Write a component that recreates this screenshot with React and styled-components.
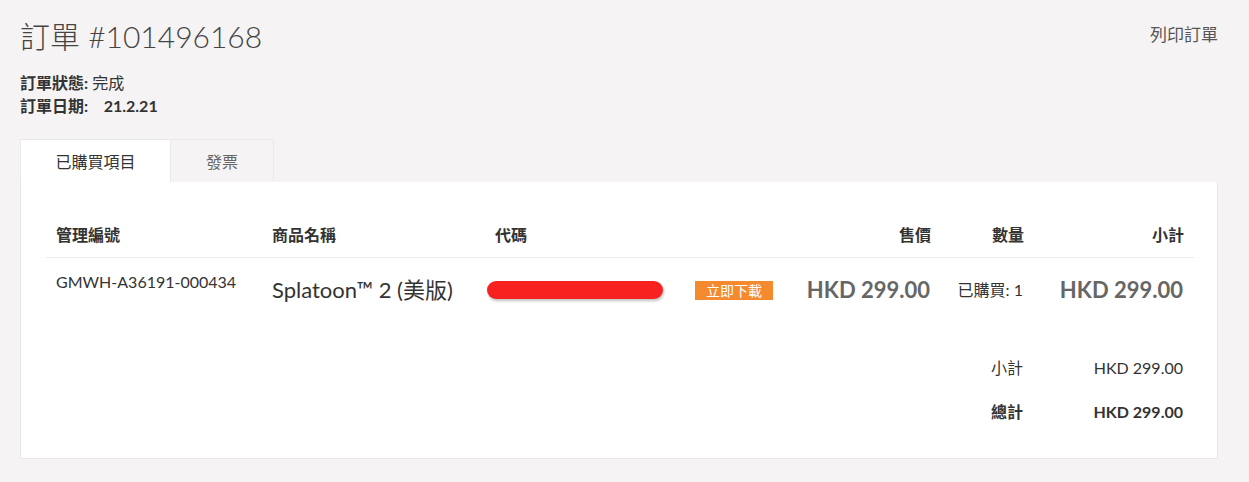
import React from "react";
import styled, { createGlobalStyle } from "styled-components";

const GlobalStyle = createGlobalStyle`
  body {
    margin: 0;
    background: #f5f3f4;
    font-family: Lato, "Noto Sans CJK TC", sans-serif;
    color: #333;
  }
`;

// page wrapper
const Page = styled.div`
  padding: 16px 31px 24px 20px;
`;

// title row with print link
const TopBar = styled.div`
  display: flex;
  justify-content: space-between;
  align-items: flex-start;
`;

const Title = styled.h1`
  margin: 0;
  font-size: 30px;
  line-height: 40px;
  font-weight: 300;
  color: #444;
`;

const PrintLink = styled.a`
  font-size: 17px;
  line-height: 38px;
  color: #555;
  cursor: pointer;
`;

const Meta = styled.div`
  margin-top: 15px;
  font-size: 16px;
  line-height: 23px;
`;

const Label = styled.span`
  font-weight: 700;
`;

// tabs
const Tabs = styled.div`
  display: flex;
  margin-top: 22px;
`;

const Tab = styled.div`
  width: ${(p) => p.$width}px;
  height: 43px;
  box-sizing: border-box;
  display: flex;
  align-items: center;
  justify-content: center;
  font-size: 16px;
  background: ${(p) => (p.$active ? "#fff" : "#f5f3f4")};
  color: ${(p) => (p.$active ? "#333" : "#666")};
  border: 1px solid #ebe9ea;
  border-bottom: none;
  ${(p) => !p.$active && "border-left: none; height: 42px;"}
`;

// white panel
const Panel = styled.div`
  background: #fff;
  border: 1px solid #e8e6e7;
  border-top: none;
  padding: 30px 25px 24px;
`;

const Table = styled.table`
  width: 100%;
  border-collapse: collapse;
  table-layout: fixed;
`;

const Th = styled.th`
  padding: 12px 10px;
  font-size: 16px;
  line-height: 21px;
  font-weight: 700;
  color: #333;
  text-align: ${(p) => p.$align || "left"};
  border-bottom: 1px solid #ebebeb;
`;

const Td = styled.td`
  padding: ${(p) => (p.$top ? "11px 11px 29px 10px" : "17px 11px 19px 10px")};
  font-size: ${(p) => p.$size || 16}px;
  line-height: 26px;
  font-weight: ${(p) => (p.$bold ? 700 : 400)};
  color: ${(p) => p.$color || "#333"};
  text-align: ${(p) => p.$align || "left"};
  vertical-align: middle;
  white-space: nowrap;
`;

const SumTd = styled.td`
  padding: ${(p) => (p.$first ? "34px 11px 12px 10px" : "12px 11px 12px 10px")};
  font-size: 16px;
  line-height: 20px;
  font-weight: ${(p) => (p.$bold ? 700 : 400)};
  color: #333;
  text-align: right;
`;

// redacted code bar
const CodeBar = styled.div`
  width: 176px;
  height: 18px;
  margin-left: -8px;
  border-radius: 9px;
  background: #f7221f;
  box-shadow: 1px 2px 3px rgba(0, 0, 0, 0.25);
`;

const DownloadBadge = styled.span`
  display: inline-block;
  padding: 0 11px;
  height: 19px;
  line-height: 19px;
  font-size: 14px;
  color: #fff;
  background: #f5892e;
`;

const columns = [216, 223, 200, 106, 150, 93, 160];

export default function App() {
  return (
    <>
      <GlobalStyle />
      <Page>
        <TopBar>
          <Title>訂單 #101496168</Title>
          <PrintLink>列印訂單</PrintLink>
        </TopBar>
        <Meta>
          <div>
            <Label>訂單狀態:</Label> 完成
          </div>
          <div>
            <Label>訂單日期:&nbsp;&nbsp;&nbsp;&nbsp;21.2.21</Label>
          </div>
        </Meta>
        <Tabs>
          <Tab $active $width={151}>已購買項目</Tab>
          <Tab $width={103}>發票</Tab>
        </Tabs>
        <Panel>
          <Table>
            <colgroup>
              {columns.map((w, i) => (
                <col key={i} style={{ width: w }} />
              ))}
            </colgroup>
            <thead>
              <tr>
                <Th>管理編號</Th>
                <Th>商品名稱</Th>
                <Th>代碼</Th>
                <Th />
                <Th $align="right">售價</Th>
                <Th $align="right">數量</Th>
                <Th $align="right">小計</Th>
              </tr>
            </thead>
            <tbody>
              <tr>
                <Td $top>GMWH-A36191-000434</Td>
                <Td $size={22}>Splatoon™ 2 (美版)</Td>
                <Td>
                  <CodeBar />
                </Td>
                <Td>
                  <DownloadBadge>立即下載</DownloadBadge>
                </Td>
                <Td $size={22} $bold $color="#666" $align="right">
                  HKD 299.00
                </Td>
                <Td $align="right">已購買: 1</Td>
                <Td $size={22} $bold $color="#666" $align="right">
                  HKD 299.00
                </Td>
              </tr>
            </tbody>
            <tfoot>
              <tr>
                <SumTd colSpan={5} $first />
                <SumTd $first>小計</SumTd>
                <SumTd $first>HKD 299.00</SumTd>
              </tr>
              <tr>
                <SumTd colSpan={5} />
                <SumTd $bold>總計</SumTd>
                <SumTd $bold>HKD 299.00</SumTd>
              </tr>
            </tfoot>
          </Table>
        </Panel>
      </Page>
    </>
  );
}
